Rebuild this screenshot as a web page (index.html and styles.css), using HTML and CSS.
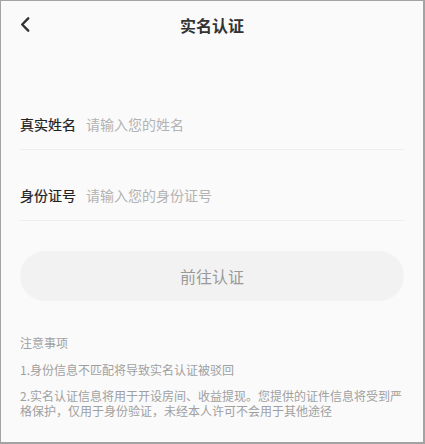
FILE: index.html
```html
<!DOCTYPE html>
<html lang="zh-CN">
<head>
<meta charset="utf-8">
<title>实名认证</title>
<link rel="stylesheet" href="styles.css">
</head>
<body>
<div class="screen">
  <header class="nav">
    <span class="back" aria-label="返回">
      <svg width="10" height="15" viewBox="0 0 10 15"><path d="M8.2 1.3 L2.2 7.5 L8.2 13.7" fill="none" stroke="#333" stroke-width="2.4" stroke-linecap="round" stroke-linejoin="round"/></svg>
    </span>
    <h1 class="title">实名认证</h1>
  </header>
  <form class="form">
    <label class="row">
      <span class="label">真实姓名</span>
      <input class="input" type="text" placeholder="请输入您的姓名">
    </label>
    <label class="row">
      <span class="label">身份证号</span>
      <input class="input" type="text" placeholder="请输入您的身份证号">
    </label>
    <button class="submit" type="button">前往认证</button>
  </form>
  <section class="notes">
    <p>注意事项</p>
    <p>1.身份信息不匹配将导致实名认证被驳回</p>
    <p>2.实名认证信息将用于开设房间、收益提现。您提供的证件信息将受到严格保护，仅用于身份验证，未经本人许可不会用于其他途径</p>
  </section>
</div>
</body>
</html>
```
FILE: styles.css
```css
* { box-sizing: border-box; }
html, body { margin: 0; padding: 0; }
body {
  font-family: "Noto Sans CJK SC", "Noto Sans", sans-serif;
  background: #fafafa;
}
.screen {
  height: 100vh;
  border: 1px solid #a3a3a3;
  border-right-width: 2px;
  border-bottom-width: 2px;
  background: #fafafa;
  padding: 0 19px;
}
.nav {
  height: 50px;
  display: flex;
  align-items: center;
  justify-content: center;
  position: relative;
}
.back {
  position: absolute;
  left: 0;
  top: 16px;
  display: flex;
}
.title {
  margin: 0;
  font-size: 16px;
  font-weight: 700;
  color: #333;
  line-height: 20px;
  position: relative;
  top: -1px;
}
.form {
  margin-top: 28px;
  display: flex;
  flex-direction: column;
}
.row {
  display: flex;
  align-items: center;
  height: 71px;
  padding-top: 35px;
  padding-bottom: 15px;
  border-bottom: 1px solid #eeeeee;
}
.label {
  font-size: 14px;
  font-weight: 400;
  color: #222;
  line-height: 20px;
  width: 66px;
  flex: none;
  -webkit-text-stroke: 0.2px #222;
}
.input {
  flex: 1;
  border: 0;
  outline: 0;
  background: transparent;
  font-family: inherit;
  font-size: 14px;
  line-height: 20px;
  padding: 0;
  color: #333;
}
.input::placeholder { color: #b3b3b3; }
.submit {
  margin-top: 30px;
  height: 50px;
  border: 0;
  border-radius: 25px;
  background: #f2f2f2;
  color: #999;
  font-family: inherit;
  font-size: 16px;
}
.notes {
  margin-top: 34px;
  color: #a0a0a0;
  font-size: 12px;
  line-height: 15px;
}
.notes p { margin: 0 0 11.5px; }
```
